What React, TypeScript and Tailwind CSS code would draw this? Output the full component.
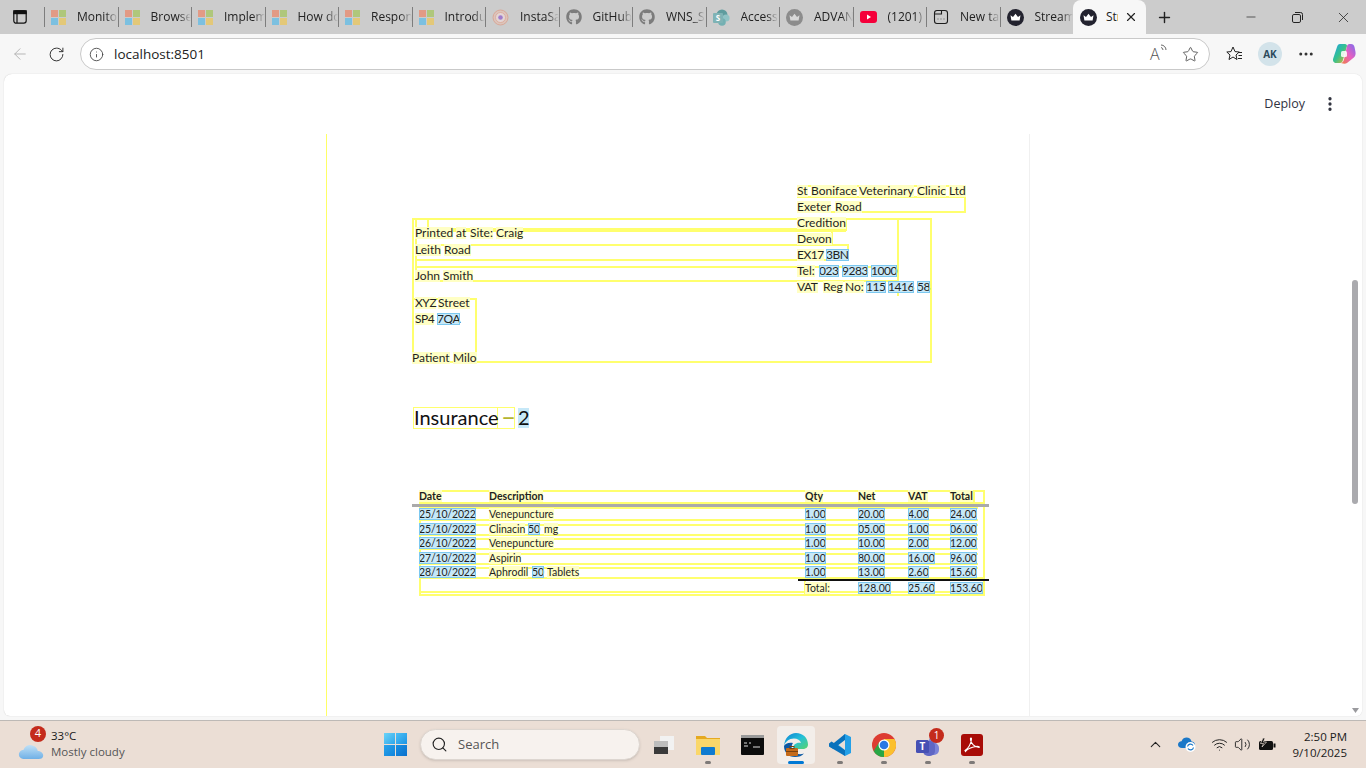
import type { ReactNode } from 'react';
import { ArrowLeft, RotateCw, Info, Star, Plus, X, Minus, ChevronUp, Search, Wifi, Volume2, MoreHorizontal, EllipsisVertical } from 'lucide-react';
import { FaGithub } from 'react-icons/fa';

const DOC_X = 326;
const DOC_Y = 134;

type Word = [string, number, number, boolean?];

function MsIcon() {
  return (
    <div className="grid h-[15px] w-[15px] shrink-0 grid-cols-2 gap-px">
      <div className="bg-[#e29a85]" />
      <div className="bg-[#afc77b]" />
      <div className="bg-[#7cc0e0]" />
      <div className="bg-[#e3c878]" />
    </div>
  );
}

function CrownIcon({ bg, fg }: { bg: string; fg: string }) {
  return (
    <svg width="17" height="17" viewBox="0 0 17 17" className="shrink-0">
      <circle cx="8.5" cy="8.5" r="8.5" fill={bg} />
      <path d="M3.5 6.2 L6 8 L8.5 4.8 L11 8 L13.5 6.2 L12.6 11.4 H4.4 Z" fill={fg} />
    </svg>
  );
}

function InstaIcon() {
  return (
    <svg width="17" height="17" viewBox="0 0 17 17" className="shrink-0">
      <circle cx="8.5" cy="8.5" r="7.5" fill="#dcc4bb" stroke="#d9a898" />
      <circle cx="8.5" cy="8.5" r="5" fill="#e3d6d6" stroke="#dda48f" strokeWidth="0.7" />
      <circle cx="8.5" cy="8.5" r="2.3" fill="#a07ccc" />
    </svg>
  );
}

function AccessIcon() {
  return (
    <svg width="17" height="17" viewBox="0 0 17 17" className="shrink-0">
      <circle cx="9" cy="6" r="5.5" fill="#5e9c9e" />
      <circle cx="13" cy="9" r="3.6" fill="#90c3c5" />
      <circle cx="9" cy="13" r="3.8" fill="#74b0b2" />
      <rect x="0" y="4" width="10" height="10" rx="1" fill="#7fb3b5" />
      <text x="5" y="12" textAnchor="middle" fontSize="8" fontWeight="700" fill="#ffffff" fontFamily="Open Sans, sans-serif">S</text>
    </svg>
  );
}

function YoutubeIcon() {
  return (
    <svg width="17" height="12" viewBox="0 0 17 12" className="shrink-0">
      <rect width="17" height="12" rx="3" fill="#f5003a" />
      <path d="M7 3.5 L11 6 L7 8.5 Z" fill="#ffffff" />
    </svg>
  );
}

function NewTabIcon() {
  return (
    <svg width="16" height="16" viewBox="0 0 16 16" fill="none" stroke="#1c1c1c" strokeWidth="1.1" className="shrink-0">
      <rect x="1.5" y="1.5" width="13" height="13" rx="2.5" />
      <path d="M1.5 5H8.5V2" />
      <path d="M4.8 10H5.2M7.8 10H8.2M10.8 10H11.2" strokeWidth="1.6" />
    </svg>
  );
}

const tabs: { title: string; icon: ReactNode }[] = [
  { title: 'Monitor', icon: <MsIcon /> },
  { title: 'Browse', icon: <MsIcon /> },
  { title: 'Implem', icon: <MsIcon /> },
  { title: 'How do', icon: <MsIcon /> },
  { title: 'Respons', icon: <MsIcon /> },
  { title: 'Introdu', icon: <MsIcon /> },
  { title: 'InstaSaf', icon: <InstaIcon /> },
  { title: 'GitHub', icon: <FaGithub size={16} color="#7c7c7c" className="shrink-0" /> },
  { title: 'WNS_S', icon: <FaGithub size={16} color="#7c7c7c" className="shrink-0" /> },
  { title: 'Access', icon: <AccessIcon /> },
  { title: 'ADVAN', icon: <CrownIcon bg="#8c8c8c" fg="#d8d8d8" /> },
  { title: '(1201) F', icon: <YoutubeIcon /> },
  { title: 'New tab', icon: <NewTabIcon /> },
  { title: 'Streamlit', icon: <CrownIcon bg="#23232f" fg="#ffffff" /> },
];

function TabBar() {
  return (
    <div className="flex h-[34px] shrink-0 items-center bg-[#cccccc]">
      <div className="flex w-[44px] shrink-0 justify-center pr-[4px]">
        <svg width="14" height="14" viewBox="0 0 14 14" fill="none" stroke="#111111" strokeWidth="1.2">
          <rect x="0.8" y="0.8" width="12.4" height="12.4" rx="2.4" />
          <rect x="0.8" y="0.8" width="12.4" height="2.8" fill="#111111" />
          <path d="M4 3.5V13" />
        </svg>
      </div>
      {tabs.map((tab) => (
        <div key={tab.title} className="flex h-[20px] w-[73.5px] shrink-0 items-center gap-[11px] border-l border-[#7d7d7d] pl-[6px]">
          {tab.icon}
          <span className="overflow-hidden whitespace-nowrap text-[12px] text-[#222222] [mask-image:linear-gradient(to_right,black_70%,transparent)]">{tab.title}</span>
        </div>
      ))}
      <div className="flex h-[34px] w-[73px] shrink-0 items-center self-end rounded-t-[8px] bg-[#f7f7f7] pl-[7px]">
        <CrownIcon bg="#23232f" fg="#ffffff" />
        <span className="ml-[9px] w-[12px] overflow-hidden whitespace-nowrap text-[12px] text-[#222222]">Streamlit</span>
        <X size={14} color="#222222" className="ml-[6px]" />
      </div>
      <div className="flex w-[36px] shrink-0 justify-center">
        <Plus size={17} color="#222222" />
      </div>
      <div className="ml-auto flex items-center">
        <div className="flex w-[46px] justify-center"><Minus size={14} color="#222222" strokeWidth={1.2} /></div>
        <div className="flex w-[46px] justify-center">
          <svg width="11" height="11" viewBox="0 0 11 11" fill="none" stroke="#222222" strokeWidth="1">
            <rect x="0.5" y="2.5" width="8" height="8" rx="1.4" />
            <path d="M3 .5H8.6A1.9 1.9 0 0 1 10.5 2.4V8" />
          </svg>
        </div>
        <div className="flex w-[46px] justify-center"><X size={17} color="#222222" strokeWidth={1.1} /></div>
      </div>
    </div>
  );
}

function Toolbar() {
  return (
    <div className="flex h-[40px] shrink-0 items-center bg-[#f7f7f7]">
      <div className="flex w-[38px] justify-center pl-[2px]"><ArrowLeft size={18} color="#b4b4b4" strokeWidth={1.3} /></div>
      <div className="flex w-[36px] justify-center"><RotateCw size={17} color="#333333" strokeWidth={1.4} /></div>
      <div className="ml-[6px] flex h-[32px] w-[1130px] items-center rounded-full border border-[#c9c9c9] bg-white pl-[8px] pr-[10px]">
        <Info size={15} color="#444444" strokeWidth={1.4} />
        <span className="ml-[10px] text-[13.5px] text-[#222222]">localhost:8501</span>
        <span className="relative ml-auto mr-[16px] w-[16px] text-[16px] font-light leading-none text-[#555555]">
          A
          <svg width="7" height="9" viewBox="0 0 7 9" fill="none" stroke="#555555" strokeWidth="0.9" className="absolute -top-[2px] right-[-1px]">
            <path d="M1 3.5A2.5 2.5 0 0 1 3 6M1 1A5 5 0 0 1 6 6" />
          </svg>
        </span>
        <Star size={17} color="#555555" strokeWidth={1.3} />
      </div>
      <div className="ml-[15px] flex items-center">
        <svg width="18" height="18" viewBox="0 0 18 18" fill="none" stroke="#222222" strokeWidth="1">
          <path d="M8 2 L10 6.6 L14.2 7 L11 10 L12 14.5 L8 12 L4 14.5 L5 10 L1.8 7 L6 6.6 Z" />
          <path d="M13 7.5H17M13.5 10.5H17M13 13.5H17" />
        </svg>
        <div className="ml-[15px] flex h-[24px] w-[24px] items-center justify-center rounded-full bg-[#d3e3ea] text-[10px] font-bold text-[#2c4a5c]">AK</div>
        <MoreHorizontal size={18} color="#333333" className="ml-[15px]" />
        <svg width="24" height="22" viewBox="0 0 24 22" className="ml-[17px]">
          <defs>
            <linearGradient id="cp1" x1="0" y1="0" x2="1" y2="1">
              <stop offset="0" stopColor="#1fa0e8" />
              <stop offset="0.5" stopColor="#36c28c" />
              <stop offset="1" stopColor="#f0b429" />
            </linearGradient>
            <linearGradient id="cp2" x1="1" y1="0" x2="0" y2="1">
              <stop offset="0" stopColor="#7a6cf0" />
              <stop offset="0.5" stopColor="#e860c0" />
              <stop offset="1" stopColor="#f08040" />
            </linearGradient>
          </defs>
          <path d="M8 1H13C14.5 1 15 2 15 3L11 17C10.5 19 9.5 20 8 20H4C1.5 20 .5 17.5 1.2 15.5L5 4C5.5 2 6.5 1 8 1Z" fill="url(#cp1)" />
          <path d="M15 3C15.5 1.5 16.5 1 18 1H19C21 1 22 2 22.5 4L23.5 9C24 12 23 14 20 16L15 20C13.5 21 12 21 9 20C11 19.5 11.5 18 12 16.5Z" fill="url(#cp2)" />
          <rect x="9" y="8" width="6" height="6" rx="1.5" fill="#ffffff" opacity="0.85" />
        </svg>
      </div>
    </div>
  );
}

const hLines: [number, number, number][] = [
  [797, 965, 185], [797, 965, 196], [797, 965, 211],
  [412, 930, 218], [427, 845, 228], [415, 845, 230], [415, 848, 244], [415, 848, 259], [415, 897, 266], [415, 897, 280],
  [412, 476, 298], [412, 930, 361],
  [419, 983, 490], [419, 983, 502], [419, 977, 507], [419, 977, 519], [419, 977, 524], [419, 977, 534], [419, 977, 538],
  [419, 977, 548], [419, 977, 553], [419, 977, 563], [419, 977, 567], [419, 983, 577], [419, 983, 591], [419, 983, 594],
];

const vLines: [number, number, number][] = [
  [412, 218, 362], [930, 218, 362], [415, 218, 281], [427, 218, 228], [475, 298, 362], [897, 218, 295], [964, 185, 212],
  [845, 218, 230], [831, 230, 244], [847, 244, 260],
  [419, 490, 595], [983, 490, 595], [973, 490, 503], [804, 578, 595],
];

const addressWords: Word[] = [
  ['Printed', 415, 233], ['at', 456, 233], ['Site:', 470, 233], ['Craig', 496, 233],
  ['Leith', 415, 250], ['Road', 444, 250],
  ['John', 415, 276], ['Smith', 443, 276],
  ['XYZ', 415, 303], ['Street', 438, 303],
  ['SP4', 415, 319], ['7QA', 437, 319, true],
  ['Patient', 412, 358], ['Milo', 453, 358],
  ['St', 797, 191], ['Boniface', 811, 191], ['Veterinary', 859, 191], ['Clinic', 917, 191], ['Ltd', 949, 191],
  ['Exeter', 797, 207], ['Road', 835, 207],
  ['Credition', 797, 223],
  ['Devon', 797, 239],
  ['EX17', 797, 255], ['3BN', 826, 255, true],
  ['Tel:', 797, 271], ['023', 819, 271, true], ['9283', 842, 271, true], ['1000', 871, 271, true],
  ['VAT', 797, 287], ['Reg', 823, 287], ['No:', 845, 287], ['115', 866, 287, true], ['1416', 888, 287, true], ['58', 917, 287, true],
];

const headerWords: Word[] = [
  ['Date', 419, 496], ['Description', 489, 496], ['Qty', 805, 496], ['Net', 858, 496], ['VAT', 908, 496], ['Total', 950, 496],
];

const rows: { y: number; date: string; desc: Word[]; net: string; vat: string; total: string }[] = [
  { y: 514, date: '25/10/2022', desc: [['Venepuncture', 489, 514]], net: '20.00', vat: '4.00', total: '24.00' },
  { y: 529, date: '25/10/2022', desc: [['Clinacin', 489, 529], ['50', 528, 529, true], ['mg', 544, 529]], net: '05.00', vat: '1.00', total: '06.00' },
  { y: 543, date: '26/10/2022', desc: [['Venepuncture', 489, 543]], net: '10.00', vat: '2.00', total: '12.00' },
  { y: 558, date: '27/10/2022', desc: [['Aspirin', 489, 558]], net: '80.00', vat: '16.00', total: '96.00' },
  { y: 572, date: '28/10/2022', desc: [['Aphrodil', 489, 572], ['50', 532, 572, true], ['Tablets', 547, 572]], net: '13.00', vat: '2.60', total: '15.60' },
];

const tableWords: Word[] = rows.flatMap((r): Word[] => [
  [r.date, 419, r.y, true],
  ...r.desc,
  ['1.00', 805, r.y, true],
  [r.net, 858, r.y, true],
  [r.vat, 908, r.y, true],
  [r.total, 950, r.y, true],
]);

const totalWords: Word[] = [
  ['Total:', 805, 588], ['128.00', 858, 588, true], ['25.60', 908, 588, true], ['153.60', 950, 588, true],
];

function DocWord({ word, size, bold, tracking = '' }: { word: Word; size: string; bold?: boolean; tracking?: string }) {
  const [text, x, y, blue] = word;
  return (
    <span
      className={`absolute -translate-y-1/2 whitespace-nowrap leading-[12px] text-[#1f1f1f] ${size} ${bold ? 'font-bold' : ''} ${tracking} ${blue ? 'bg-[#c6e8f8] outline outline-1 -outline-offset-1 outline-[#7cc8ef]' : 'bg-[#ffffc4]'}`}
      style={{ left: x - DOC_X, top: y - DOC_Y }}
    >
      {text}
    </span>
  );
}

function DocumentCanvas() {
  return (
    <div className="relative h-[582px] w-[704px] border-r border-[#f0f0f0] font-['Lato',sans-serif]">
      <div className="absolute bottom-0 left-0 top-0 w-px bg-[#ffff66]" />
      {hLines.map(([x1, x2, y]) => (
        <div key={`h${x1}-${x2}-${y}`} className="absolute h-[2px] bg-[#ffff6e]" style={{ left: x1 - DOC_X, top: y - DOC_Y, width: x2 - x1 + 1 }} />
      ))}
      {vLines.map(([x, y1, y2]) => (
        <div key={`v${x}-${y1}-${y2}`} className="absolute w-[2px] bg-[#ffff6e]" style={{ left: x - DOC_X, top: y1 - DOC_Y, height: y2 - y1 + 1 }} />
      ))}
      {addressWords.map((w) => <DocWord key={`${w[0]}${w[1]}${w[2]}`} word={w} size="text-[12px]" tracking={/^[A-Z0-9]+$/.test(w[0]) ? 'tracking-[-0.45px]' : ''} />)}
      {headerWords.map((w) => <DocWord key={`${w[0]}${w[1]}`} word={w} size="text-[10.5px]" bold />)}
      {tableWords.map((w) => <DocWord key={`${w[0]}${w[1]}${w[2]}`} word={w} size="text-[10.5px]" tracking={w[0].includes('/') ? 'tracking-[-0.15px]' : ''} />)}
      {totalWords.map((w) => <DocWord key={`${w[0]}${w[1]}`} word={w} size="text-[10.5px]" />)}

      <div className="absolute left-[87px] top-[273px] h-[22px] w-[85px] border border-[#ffff6e]" />
      <div className="absolute left-[171px] top-[273px] h-[22px] w-[18px] border border-[#ffff6e]" />
      <span className="absolute left-[88px] top-[271px] text-[20px] leading-[24px] text-[#111111]">Insurance</span>
      <span className="absolute left-[175px] top-[270px] text-[26px] leading-[24px] text-[#b4b430]">–</span>
      <span className="absolute left-[192px] top-[274px] h-[20px] w-[11px] bg-[#c6e8f8] text-center text-[20px] leading-[19px] text-[#111111]">2</span>

      <div className="absolute left-[86px] top-[370px] h-[3px] w-[577px] bg-[#aaaaaa]" />
      <div className="absolute left-[472px] top-[445px] h-[2px] w-[191px] bg-[#111111]" />
    </div>
  );
}

function Scrollbar() {
  return (
    <div className="flex w-[14px] shrink-0 flex-col items-center bg-white">
      <div className="h-[206px] w-full" />
      <div className="h-[224px] w-[6px] rounded-full bg-[#aaaaae]" />
      <div className="flex-1" />
      <svg width="7" height="5" viewBox="0 0 7 5" className="mb-[3px]"><path d="M0 0H7L3.5 5Z" fill="#9a9a9e" /></svg>
    </div>
  );
}

function MainPanel() {
  return (
    <div className="flex h-[646px] shrink-0 bg-[#f7f7f7] pb-[4px] pl-[4px] pr-[4px]">
      <div className="flex flex-1 overflow-hidden rounded-t-[8px] rounded-b-[6px] bg-white shadow-[0_0_1px_#bdbdbd]">
        <div className="flex min-w-0 flex-1 flex-col">
          <div className="flex h-[60px] shrink-0 items-center justify-end pr-[9px]">
            <span className="text-[12.5px] text-[#31333f]">Deploy</span>
            <EllipsisVertical size={18} color="#31333f" strokeWidth={2.4} className="ml-[16px]" />
          </div>
          <div className="flex-1 pl-[322px]">
            <DocumentCanvas />
          </div>
        </div>
        <Scrollbar />
      </div>
    </div>
  );
}

function WeatherWidget() {
  return (
    <div className="flex w-[330px] shrink-0 items-center pl-[14px]">
      <div className="relative h-[36px] w-[37px]">
        <svg width="27" height="20" viewBox="0 0 30 22" className="absolute left-[4px] top-[14px]">
          <defs>
            <linearGradient id="cl" x1="0" y1="0" x2="0" y2="1">
              <stop offset="0" stopColor="#bfe0f6" />
              <stop offset="1" stopColor="#6fb0e6" />
            </linearGradient>
          </defs>
          <path d="M7 20C3 20 1 17.5 1 15C1 12 3.5 10 6 10C7.5 6 11 4 14.5 4.5C19 5 21.5 8 22 11C25 11 28 13 28 16C28 18.5 26 20 23 20Z" fill="url(#cl)" />
        </svg>
        <div className="absolute left-[16px] top-[-1px] flex h-[16px] w-[16px] items-center justify-center rounded-full bg-[#c42b1c] text-[11px] text-white">4</div>
      </div>
      <div className="-mt-[2px] flex flex-col leading-[16px]">
        <span className="text-[11.5px] text-[#1a1a1a]">33°C</span>
        <span className="text-[11.5px] text-[#555555]">Mostly cloudy</span>
      </div>
    </div>
  );
}

function WindowsLogo() {
  return (
    <div className="grid h-[23px] w-[23px] grid-cols-2 gap-px">
      <div className="bg-gradient-to-br from-[#6ad4f8] to-[#2ca6ea]" />
      <div className="bg-gradient-to-br from-[#4cc0f5] to-[#1a94e4]" />
      <div className="bg-gradient-to-br from-[#2aa4ea] to-[#0f84dc]" />
      <div className="bg-gradient-to-br from-[#1a90e2] to-[#0a70cc]" />
    </div>
  );
}

function AppSlot({ children, running, active }: { children: ReactNode; running?: boolean; active?: boolean }) {
  return (
    <div className={`relative flex h-[38px] w-[38px] items-center justify-center rounded-[4px] ${active ? 'bg-[#f3eeea]' : ''}`}>
      {children}
      {running && <div className={`absolute bottom-0 left-1/2 h-[3px] -translate-x-1/2 rounded-full ${active ? 'w-[16px] bg-[#0078d4]' : 'w-[6px] bg-[#7e7a78]'}`} />}
    </div>
  );
}

function TaskbarApps() {
  return (
    <div className="flex items-center gap-[6px]">
      <AppSlot>
        <svg width="22" height="22" viewBox="0 0 22 22">
          <rect x="7" y="2" width="14" height="14" fill="#f2f2f2" />
          <rect x="1" y="7" width="14" height="13" fill="#3a3a3a" />
          <rect x="1" y="7" width="14" height="6" fill="#bdbdbd" />
        </svg>
      </AppSlot>
      <AppSlot running>
        <svg width="24" height="22" viewBox="0 0 24 22">
          <path d="M0 2H9L11 4H24V20H0Z" fill="#e5a921" />
          <rect x="0" y="5" width="24" height="16" fill="#fad76a" />
          <rect x="5" y="13" width="14" height="8" rx="1" fill="#0f7bd0" />
        </svg>
      </AppSlot>
      <AppSlot>
        <svg width="23" height="20" viewBox="0 0 23 20">
          <rect width="23" height="20" rx="1" fill="#0c0c0c" />
          <rect width="23" height="3" fill="#9a9a9a" />
          <path d="M3 8H6M8 8H10M3 11H7M12 12H19" stroke="#dddddd" strokeWidth="1" />
        </svg>
      </AppSlot>
      <AppSlot running active>
        <svg width="26" height="26" viewBox="0 0 26 26">
          <defs>
            <linearGradient id="edge" x1="0" y1="0" x2="1" y2="1">
              <stop offset="0" stopColor="#0c7fd4" />
              <stop offset="0.5" stopColor="#25c0d8" />
              <stop offset="1" stopColor="#58d46a" />
            </linearGradient>
          </defs>
          <path d="M13 1C20 1 25 6 25 12.5C25 15.5 22.5 17 20 17H10C10 12 14 10 18 11C17 7 12 5.5 7.5 7C4 8.5 1.5 11 1 14C1.5 6 7 1 13 1Z" fill="url(#edge)" />
          <path d="M1 14C1 20 5 25 12 25C16 25 19 24 21 21.5C17 23 12.5 22 10 19C8 16.5 8.5 13 10 11C5.5 10 2 12 1 14Z" fill="#0c59a4" />
          <rect x="3" y="16" width="12" height="8" rx="1" fill="#c46a1a" />
          <rect x="7" y="14.5" width="4" height="2" fill="none" stroke="#7a4210" />
          <rect x="3" y="19" width="12" height="1" fill="#7a4210" />
        </svg>
      </AppSlot>
      <AppSlot running>
        <svg width="24" height="24" viewBox="0 0 24 24">
          <path d="M17 1L23 4V20L17 23L7 13.5L17 1Z" fill="#23a0e8" />
          <path d="M17 1V7L5.5 16L1.5 13.5Z" fill="#0a72bc" />
          <path d="M1 10.5L3.5 8.5L17 17V23L1 13.5Z" fill="#0a72bc" />
          <path d="M17 7L10.5 12L17 17Z" fill="#eaded6" />
        </svg>
      </AppSlot>
      <AppSlot running>
        <svg width="24" height="24" viewBox="0 0 24 24">
          <circle cx="12" cy="12" r="12" fill="#dd3c32" />
          <path d="M12 12L1.6 18A12 12 0 0 0 12 24Z" fill="#28a745" />
          <path d="M12 24A12 12 0 0 0 22.4 6H12Z" fill="#fbc02d" />
          <path d="M12 12L1.6 18L7 9.5Z" fill="#28a745" />
          <circle cx="12" cy="12" r="5.5" fill="#ffffff" />
          <circle cx="12" cy="12" r="4.3" fill="#2b78e4" />
        </svg>
      </AppSlot>
      <AppSlot running>
        <div className="relative h-[24px] w-[26px]">
          <svg width="26" height="24" viewBox="0 0 26 24">
            <circle cx="18" cy="8" r="4" fill="#7b83d8" />
            <rect x="11" y="10" width="13" height="12" rx="5" fill="#7b83d8" />
            <rect x="8" y="8" width="12" height="15" rx="5" fill="#5f67c4" />
            <rect x="1" y="7" width="13" height="13" rx="1.5" fill="#4650b4" />
            <text x="7.5" y="17" textAnchor="middle" fontSize="10" fontWeight="700" fill="#ffffff" fontFamily="Open Sans, sans-serif">T</text>
          </svg>
          <div className="absolute -right-[3px] -top-[5px] flex h-[15px] w-[15px] items-center justify-center rounded-full bg-[#c42b1c] text-[10px] text-white">1</div>
        </div>
      </AppSlot>
      <AppSlot running>
        <svg width="22" height="22" viewBox="0 0 22 22">
          <rect width="22" height="22" rx="3" fill="#a80c07" />
          <path d="M4 16.5C7 15 10.5 9 10.5 5C10.5 3.5 9 3.5 9.5 6C10 9 13.5 13.5 18 13.5C19 13.5 18 12 15 12.5C11.5 13 7 14.5 4.5 17.5Z" fill="none" stroke="#ffffff" strokeWidth="1.1" />
        </svg>
      </AppSlot>
    </div>
  );
}

function SystemTray() {
  return (
    <div className="ml-auto flex items-center pr-[19px]">
      <ChevronUp size={17} color="#222222" strokeWidth={1.5} />
      <svg width="18" height="15" viewBox="0 0 18 15" className="ml-[14px]">
        <path d="M4 11C1.5 11 0 9.5 0 7.5C0 5.5 1.5 4.2 3.5 4.2C4.5 1.5 6.5 .5 8.5 .5C11 .5 13 2 13.5 4.5C15.5 4.5 17 6 17 8C17 10 15.5 11 14 11Z" fill="#1b78c8" />
        <circle cx="12.5" cy="10" r="5" fill="#ffffff" />
        <path d="M9.5 9.5A3 3 0 0 1 15 8.5M15.5 10.5A3 3 0 0 1 10 11.5" stroke="#1b78c8" strokeWidth="1.2" fill="none" />
      </svg>
      <Wifi size={17} color="#222222" strokeWidth={1.4} className="ml-[15px]" />
      <Volume2 size={17} color="#222222" strokeWidth={1.3} className="ml-[6px]" />
      <svg width="18" height="14" viewBox="0 0 18 14" className="ml-[7px]">
        <rect x="1" y="3" width="14" height="9" rx="1.5" fill="#111111" />
        <rect x="15.5" y="5.5" width="2" height="4" fill="#111111" />
        <path d="M5 0L2.5 5.5H5.5L4 9L8.5 4H5.5L7 0Z" fill="#111111" stroke="#e9dcd2" strokeWidth="0.7" />
      </svg>
      <div className="ml-[15px] flex w-[56px] flex-col items-end text-[11.5px] leading-[16px] text-[#1a1a1a]">
        <span>2:50 PM</span>
        <span>9/10/2025</span>
      </div>
    </div>
  );
}

function Taskbar() {
  return (
    <div className="flex h-[48px] shrink-0 items-center border-t border-[#bdb9b6] bg-[#ebded5]">
      <WeatherWidget />
      <div className="ml-[54px]"><WindowsLogo /></div>
      <div className="ml-[13px] flex h-[31px] w-[220px] items-center rounded-full border border-[#ddd6d0] bg-[#f7f2ee] pl-[10px] shadow-sm">
        <Search size={17} color="#222222" strokeWidth={1.6} />
        <span className="ml-[10px] text-[13px] text-[#555555]">Search</span>
      </div>
      <div className="ml-[5px]"><TaskbarApps /></div>
      <SystemTray />
    </div>
  );
}

export default function App() {
  return (
    <div className="flex h-[768px] w-[1366px] flex-col overflow-hidden bg-[#f7f7f7] font-['Open_Sans',sans-serif]">
      <TabBar />
      <Toolbar />
      <MainPanel />
      <Taskbar />
    </div>
  );
}
